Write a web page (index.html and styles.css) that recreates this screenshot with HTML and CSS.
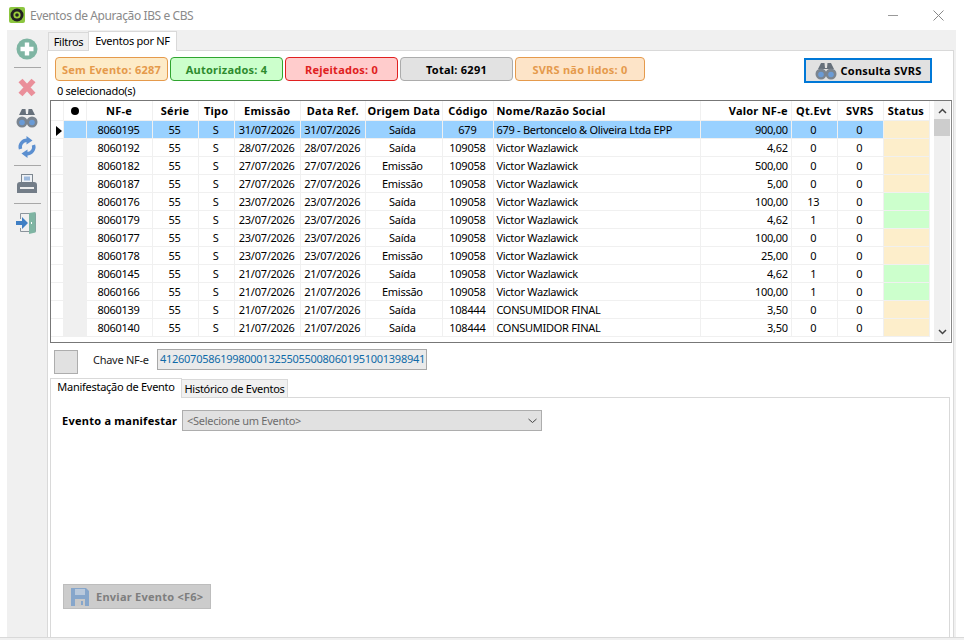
FILE: index.html
```html
<!DOCTYPE html>
<html lang="pt-BR">
<head>
    <meta charset="UTF-8">
    <title>Eventos de Apuração IBS e CBS</title>
    <link rel="stylesheet" href="styles.css">
</head>
<body>
    <div class="titlebar">
        <svg class="app-icon" width="16" height="16" viewBox="0 0 16 16">
            <rect width="16" height="16" rx="2" fill="#8cc63f"/>
            <circle cx="8" cy="8" r="6.5" fill="#222"/>
            <circle cx="8" cy="8" r="3.6" fill="#9ccf3c"/>
            <circle cx="8" cy="8" r="1.8" fill="#222"/>
        </svg>
        <span class="title">Eventos de Apuração IBS e CBS</span>
        <svg class="win-btn win-min" width="10" height="10" viewBox="0 0 10 10"><path d="M0 5.5H10" stroke="#999" fill="none"/></svg>
        <svg class="win-btn win-close" width="11" height="11" viewBox="0 0 11 11"><path d="M.5 .5L10.5 10.5M10.5 .5L.5 10.5" stroke="#888" fill="none"/></svg>
    </div>

    <div class="frame">
        <div class="toolbar">
            <svg class="tool" width="22" height="22" viewBox="0 0 22 22">
                <circle cx="11" cy="11" r="10.5" fill="#7fb5a3"/>
                <path d="M11 4.5V17.5M4.5 11H17.5" stroke="#fff" stroke-width="4.4"/>
            </svg>
            <div class="tool-sep"></div>
            <svg class="tool tool-x" width="22" height="22" viewBox="0 0 22 22">
                <path d="M4.5 4.500L17.500 18.500M17.500 4.500L4.500 18.500" stroke="#ea8f9a" stroke-width="5.500"/>
            </svg>
            <svg class="tool" width="22" height="22" viewBox="0 0 22 22">
                <path d="M3 8L6 2H9.500L10 7H12L12.500 2H16L19 8Z" fill="#66707b"/>
                <circle cx="6" cy="15" r="5.500" fill="#7b8590"/>
                <circle cx="16" cy="15" r="5.500" fill="#7b8590"/>
                <circle cx="6" cy="15.500" r="2.800" fill="#6a9bd6"/>
                <circle cx="16" cy="15.500" r="2.800" fill="#6a9bd6"/>
            </svg>
            <svg class="tool" width="22" height="22" viewBox="0 0 22 22">
                <path d="M4.500 13A6.800 6.800 0 0 1 11 4.200" stroke="#5b8fd0" stroke-width="3.400" fill="none"/>
                <path d="M17.500 9A6.800 6.800 0 0 1 11 17.800" stroke="#5b8fd0" stroke-width="3.400" fill="none"/>
                <path d="M10.500 0L16.500 4.500L10.500 8.500ZM11.500 13.500L5.500 17.500L11.500 22Z" fill="#5b8fd0"/>
            </svg>
            <div class="tool-sep"></div>
            <svg class="tool" width="22" height="22" viewBox="0 0 22 22">
                <rect x="5.500" y=".5" width="11" height="9" fill="#eef1f5" stroke="#7d8790"/>
                <rect x="8" y="2.500" width="6" height="4" fill="#9db9dc"/>
                <path d="M1 11Q1 8 4 8H18Q21 8 21 11V19H1Z" fill="#737d88"/>
                <rect x="4" y="13" width="14" height="2" fill="#eee"/>
            </svg>
            <div class="tool-sep"></div>
            <svg class="tool" width="22" height="22" viewBox="0 0 22 22">
                <path d="M4.500 7V1.500H19.500V19.500H14M4.500 16V19.500H13" stroke="#8b949c" fill="none"/>
                <path d="M13 1L19.500 0V20.500L13 22Z" fill="#7fb5a3"/>
                <rect x="15" y="10" width="1" height="2" fill="#fff"/>
                <path d="M0 9H6V5L12 11L6 17V13H0Z" fill="#3f7fc4"/>
            </svg>
        </div>

        <div class="main">
            <div class="tabs">
                <div class="tab tab-filtros">Filtros</div>
                <div class="tab tab-on tab-nf">Eventos por NF</div>
            </div>
            <div class="sheet">
                <div class="counters">
                    <div class="badge b-sem">Sem Evento: 6287</div>
                    <div class="badge b-aut">Autorizados: 4</div>
                    <div class="badge b-rej">Rejeitados: 0</div>
                    <div class="badge b-tot">Total: 6291</div>
                    <div class="badge b-svrs">SVRS não lidos: 0</div>
                    <button class="btn-svrs">
                        <svg width="22" height="18" viewBox="0 0 22 18">
                            <path d="M3 7L6 1H9.500L10 6H12L12.500 1H16L19 7Z" fill="#66707b"/>
                            <circle cx="6" cy="12" r="5.500" fill="#7b8590"/>
                            <circle cx="16" cy="12" r="5.500" fill="#7b8590"/>
                            <circle cx="6" cy="12.500" r="2.800" fill="#6a9bd6"/>
                            <circle cx="16" cy="12.500" r="2.800" fill="#6a9bd6"/>
                        </svg>
                        Consulta SVRS
                    </button>
                </div>
                <div class="sel-count">0 selecionado(s)</div>

                <div class="grid-box">
                    <table class="grid">
                        <colgroup>
                            <col class="c-ind"><col class="c-dot"><col class="c-nf"><col class="c-serie"><col class="c-tipo">
                            <col class="c-emi"><col class="c-ref"><col class="c-ori"><col class="c-cod"><col class="c-nome">
                            <col class="c-val"><col class="c-qt"><col class="c-svrs"><col class="c-st">
                        </colgroup>
                        <thead>
                            <tr>
                                <th></th><th><span class="dot"></span></th><th>NF-e</th><th>Série</th><th>Tipo</th><th>Emissão</th><th>Data Ref.</th>
                                <th>Origem Data</th><th>Código</th><th class="left">Nome/Razão Social</th><th class="right">Valor NF-e</th><th>Qt.Evt</th><th>SVRS</th><th>Status</th>
                            </tr>
                        </thead>
                        <tbody>
                            <tr class="sel">
                                <td class="ind"><span class="arrow"></span></td><td class="fix"></td><td>8060195</td><td>55</td><td>S</td><td>31/07/2026</td><td>31/07/2026</td>
                                <td>Saída</td><td>679</td><td class="left">679 - Bertoncelo &amp; Oliveira Ltda EPP</td><td class="right">900,00</td><td>0</td><td>0</td><td class="st-y"></td>
                            </tr>
                            <tr>
                                <td class="ind"></td><td class="fix"></td><td>8060192</td><td>55</td><td>S</td><td>28/07/2026</td><td>28/07/2026</td>
                                <td>Saída</td><td>109058</td><td class="left">Victor Wazlawick</td><td class="right">4,62</td><td>0</td><td>0</td><td class="st-y"></td>
                            </tr>
                            <tr>
                                <td class="ind"></td><td class="fix"></td><td>8060182</td><td>55</td><td>S</td><td>27/07/2026</td><td>27/07/2026</td>
                                <td>Emissão</td><td>109058</td><td class="left">Victor Wazlawick</td><td class="right">500,00</td><td>0</td><td>0</td><td class="st-y"></td>
                            </tr>
                            <tr>
                                <td class="ind"></td><td class="fix"></td><td>8060187</td><td>55</td><td>S</td><td>27/07/2026</td><td>27/07/2026</td>
                                <td>Emissão</td><td>109058</td><td class="left">Victor Wazlawick</td><td class="right">5,00</td><td>0</td><td>0</td><td class="st-y"></td>
                            </tr>
                            <tr>
                                <td class="ind"></td><td class="fix"></td><td>8060176</td><td>55</td><td>S</td><td>23/07/2026</td><td>23/07/2026</td>
                                <td>Saída</td><td>109058</td><td class="left">Victor Wazlawick</td><td class="right">100,00</td><td>13</td><td>0</td><td class="st-g"></td>
                            </tr>
                            <tr>
                                <td class="ind"></td><td class="fix"></td><td>8060179</td><td>55</td><td>S</td><td>23/07/2026</td><td>23/07/2026</td>
                                <td>Saída</td><td>109058</td><td class="left">Victor Wazlawick</td><td class="right">4,62</td><td>1</td><td>0</td><td class="st-g"></td>
                            </tr>
                            <tr>
                                <td class="ind"></td><td class="fix"></td><td>8060177</td><td>55</td><td>S</td><td>23/07/2026</td><td>23/07/2026</td>
                                <td>Saída</td><td>109058</td><td class="left">Victor Wazlawick</td><td class="right">100,00</td><td>0</td><td>0</td><td class="st-y"></td>
                            </tr>
                            <tr>
                                <td class="ind"></td><td class="fix"></td><td>8060178</td><td>55</td><td>S</td><td>23/07/2026</td><td>23/07/2026</td>
                                <td>Emissão</td><td>109058</td><td class="left">Victor Wazlawick</td><td class="right">25,00</td><td>0</td><td>0</td><td class="st-y"></td>
                            </tr>
                            <tr>
                                <td class="ind"></td><td class="fix"></td><td>8060145</td><td>55</td><td>S</td><td>21/07/2026</td><td>21/07/2026</td>
                                <td>Saída</td><td>109058</td><td class="left">Victor Wazlawick</td><td class="right">4,62</td><td>1</td><td>0</td><td class="st-g"></td>
                            </tr>
                            <tr>
                                <td class="ind"></td><td class="fix"></td><td>8060166</td><td>55</td><td>S</td><td>21/07/2026</td><td>21/07/2026</td>
                                <td>Emissão</td><td>109058</td><td class="left">Victor Wazlawick</td><td class="right">100,00</td><td>1</td><td>0</td><td class="st-g"></td>
                            </tr>
                            <tr>
                                <td class="ind"></td><td class="fix"></td><td>8060139</td><td>55</td><td>S</td><td>21/07/2026</td><td>21/07/2026</td>
                                <td>Saída</td><td>108444</td><td class="left">CONSUMIDOR FINAL</td><td class="right">3,50</td><td>0</td><td>0</td><td class="st-y"></td>
                            </tr>
                            <tr>
                                <td class="ind"></td><td class="fix"></td><td>8060140</td><td>55</td><td>S</td><td>21/07/2026</td><td>21/07/2026</td>
                                <td>Saída</td><td>108444</td><td class="left">CONSUMIDOR FINAL</td><td class="right">3,50</td><td>0</td><td>0</td><td class="st-y"></td>
                            </tr>
                        </tbody>
                    </table>
                    <div class="scrollbar">
                        <svg width="9" height="6" viewBox="0 0 9 6"><path d="M1 5L4.500 1.500L8 5" stroke="#444" stroke-width="1.500" fill="none"/></svg>
                        <div class="thumb"></div>
                        <svg class="sb-down" width="9" height="6" viewBox="0 0 9 6"><path d="M1 1L4.500 4.500L8 1" stroke="#444" stroke-width="1.500" fill="none"/></svg>
                    </div>
                </div>

                <div class="key-row">
                    <div class="key-box"></div>
                    <label class="key-label">Chave NF-e</label>
                    <div class="key-value">41260705861998000132550550080601951001398941</div>
                </div>

                <div class="tabs tabs-low">
                    <div class="tab tab-on tab-man">Manifestação de Evento</div>
                    <div class="tab tab-hist">Histórico de Eventos</div>
                </div>
                <div class="sheet-low">
                    <div class="event-row">
                        <label class="event-label">Evento a manifestar</label>
                        <div class="combo">
                            <span>&lt;Selecione um Evento&gt;</span>
                            <svg width="9" height="6" viewBox="0 0 9 6"><path d="M.5 1L4.500 4.500L8.500 1" stroke="#444" fill="none"/></svg>
                        </div>
                    </div>
                    <button class="btn-send">
                        <svg width="18" height="18" viewBox="0 0 18 18">
                            <path d="M0 0H15L18 3V18H0Z" fill="#86a6cb"/>
                            <rect x="4" y="1" width="10" height="6" fill="#b9c9dc"/>
                            <rect x="4" y="11" width="10" height="7" fill="#c8c8c8"/>
                            <rect x="10" y="13" width="2" height="4" fill="#86a6cb"/>
                        </svg>
                        Enviar Evento &lt;F6&gt;
                    </button>
                </div>
            </div>
        </div>
    </div>
    <div class="bottom-strip"></div>
</body>
</html>
```

FILE: styles.css
```css
* {
    box-sizing: border-box;
}
html, body {
    height: 100%;
}
body {
    margin: 0;
    background: #fff;
    font-family: "Noto Sans", sans-serif;
    font-size: 11px;
    letter-spacing: -0.27px;
    color: #000;
    overflow: hidden;
}
.titlebar {
    height: 30px;
    display: flex;
    align-items: center;
    padding-left: 9px;
}
.app-icon {
    margin-top: -1px;
}
.title {
    margin-left: 5px;
    font-size: 12px;
    letter-spacing: -0.4px;
    color: #8a8a8a;
}
.win-btn {
    flex: none;
}
.win-min {
    margin-left: auto;
}
.win-close {
    margin: 0 20px 0 35px;
}
.frame {
    margin-left: 7px;
    width: 949px;
    height: 607px;
    background: #f0f0f0;
    display: flex;
}
.bottom-strip {
    height: 3px;
    background: #f0f0f0;
    border-top: 1px solid #d9d9d9;
}
.toolbar {
    width: 40px;
    display: flex;
    flex-direction: column;
    align-items: center;
    padding-top: 8px;
}
.tool {
    display: block;
    flex: none;
    margin-bottom: 7px;
}
.tool-x {
    margin-bottom: 9px;
}
.tool-sep {
    width: 27px;
    height: 1px;
    flex: none;
    background: #a8a8a8;
    margin-bottom: 8px;
}
.main {
    width: 907px;
    display: flex;
    flex-direction: column;
}
.tabs {
    display: flex;
    height: 20px;
    align-items: flex-end;
    padding-left: 1px;
}
.tab {
    height: 18px;
    padding-top: 1px;
    text-align: center;
    background: #f0f0f0;
    border: 1px solid #d9d9d9;
    border-bottom: none;
}
.tab-on {
    height: 20px;
    background: #fff;
    position: relative;
    top: 1px;
    z-index: 1;
}
.tab-filtros { width: 41px; }
.tab-nf { width: 89px; margin-left: -1px; }
.sheet {
    flex: 1;
    background: #fff;
    border: 1px solid #d9d9d9;
    border-bottom: none;
    padding: 6px 1px 0 2px;
}
.counters {
    display: flex;
    gap: 2px;
    height: 26px;
    letter-spacing: 0.25px;
}
.badge {
    width: 113px;
    height: 24px;
    border: 1px solid;
    border-radius: 4px;
    display: flex;
    align-items: center;
    justify-content: center;
    font-weight: bold;
}
.b-sem { margin-left: 5px; background: #fdebc8; border-color: #e59a4c; color: #e59a4c; }
.b-aut { background: #ccffcc; border-color: #2fa52f; color: #2e8b2e; }
.b-rej { background: #ffcccc; border-color: #e02020; color: #e02020; }
.b-tot { background: #e2e2e2; border-color: #acacac; color: #000; }
.b-svrs { width: 130px; background: #fde4c8; border-color: #e59a4c; color: #e59a4c; }
.btn-svrs {
    width: 128px;
    height: 25px;
    margin: 1px 0 0 157px;
    border: 2px solid #0078d7;
    background: #e1e1e1;
    font: bold 11px "Noto Sans", sans-serif;
    letter-spacing: 0.25px;
    display: flex;
    align-items: center;
    justify-content: center;
    gap: 4px;
    padding: 0;
}
.sel-count {
    height: 17px;
    margin-left: 7px;
    margin-top: 0;
}
.grid-box {
    width: 902px;
    height: 243px;
    border: 1px solid #777;
    border-right-color: #888;
    display: flex;
}
.grid {
    width: 879px;
    table-layout: fixed;
    border-collapse: separate;
    border-spacing: 0;
    align-self: flex-start;
}
.c-ind { width: 13px; }
.c-dot { width: 23px; }
.c-nf { width: 66px; }
.c-serie { width: 46px; }
.c-tipo { width: 36px; }
.c-emi { width: 66px; }
.c-ref { width: 65px; }
.c-ori { width: 77px; }
.c-cod { width: 51px; }
.c-nome { width: 206px; }
.c-val { width: 91px; }
.c-qt { width: 46px; }
.c-svrs { width: 46px; }
.c-st { width: 46px; }
.grid th {
    height: 20px;
    padding: 0 1px 0 0;
    font-weight: bold;
    letter-spacing: 0.25px;
    text-align: center;
    border-right: 1px solid #f0f0f0;
    border-bottom: 1px solid #f0f0f0;
    white-space: nowrap;
    overflow: hidden;
}
.grid td {
    height: 18px;
    padding: 0 3px 0 1px;
    text-align: center;
    border-right: 1px solid #f0f0f0;
    border-bottom: 1px solid #f0f0f0;
    white-space: nowrap;
    overflow: hidden;
}
.grid td:nth-child(8) {
    padding: 0 5px 0 1px;
}
.grid .left {
    text-align: left;
    padding-left: 2px;
}
.grid .right {
    text-align: right;
    padding-right: 3px;
}
.grid .fix {
    background: #f0f0f0;
}
.grid .ind {
    padding: 0;
}
.sel td {
    background: #99d1ff;
}
.sel .ind {
    background: #fff;
}
.grid .sel .fix {
    background: #99d1ff;
}
.grid .st-y {
    background: #fdeecb;
}
.grid .st-g {
    background: #ccffcc;
}
.dot {
    display: inline-block;
    width: 8px;
    height: 8px;
    border-radius: 50%;
    background: #000;
}
.arrow {
    display: inline-block;
    border-left: 6px solid #000;
    border-top: 5px solid transparent;
    border-bottom: 5px solid transparent;
    vertical-align: middle;
    margin-left: 3px;
}
.scrollbar {
    width: 16px;
    margin-left: 4px;
    height: 240px;
    background: #f0f0f0;
    display: flex;
    flex-direction: column;
    align-items: center;
    padding-top: 7px;
}
.thumb {
    width: 16px;
    height: 17px;
    flex: none;
    margin-top: 5px;
    background: #cdcdcd;
}
.sb-down {
    margin-top: auto;
    margin-bottom: 6px;
}
.key-row {
    display: flex;
    align-items: flex-start;
    margin-top: 6px;
    height: 28px;
}
.key-box {
    width: 24px;
    height: 24px;
    margin: 1px 0 0 4px;
    background: #e1e1e1;
    border: 1px solid #adadad;
}
.key-label {
    width: 64px;
    margin: 3px 0 0 15px;
    color: #222;
}
.key-value {
    width: 270px;
    height: 21px;
    background: #eaeaea;
    border: 1px solid #a8a8a8;
    color: #0f6aa8;
    padding: 1px 0 0 2px;
    white-space: nowrap;
}
.tabs-low {
    padding-left: 0;
}
.tab-man { width: 132px; padding-top: 0; }
.tab-hist { width: 107px; margin-left: -1px; }
.sheet-low {
    height: 240px;
    border: 1px solid #d9d9d9;
    border-bottom: none;
    width: 900px;
    padding: 12px 0 0 11px;
}
.event-row {
    display: flex;
    align-items: center;
    height: 21px;
}
.event-label {
    font-weight: bold;
    letter-spacing: 0.25px;
    width: 120px;
}
.combo {
    width: 360px;
    height: 21px;
    background: #e1e1e1;
    border: 1px solid #adadad;
    color: #6d6d6d;
    display: flex;
    align-items: center;
    justify-content: space-between;
    padding: 0 4px;
}
.btn-send {
    margin: 153px 0 0 1px;
    width: 148px;
    height: 25px;
    background: #cccccc;
    border: 1px solid #bdbdbd;
    color: #7e7e7e;
    font: bold 11px "Noto Sans", sans-serif;
    letter-spacing: 0.25px;
    display: flex;
    align-items: center;
    gap: 7px;
    padding: 0 0 0 7px;
}
```
